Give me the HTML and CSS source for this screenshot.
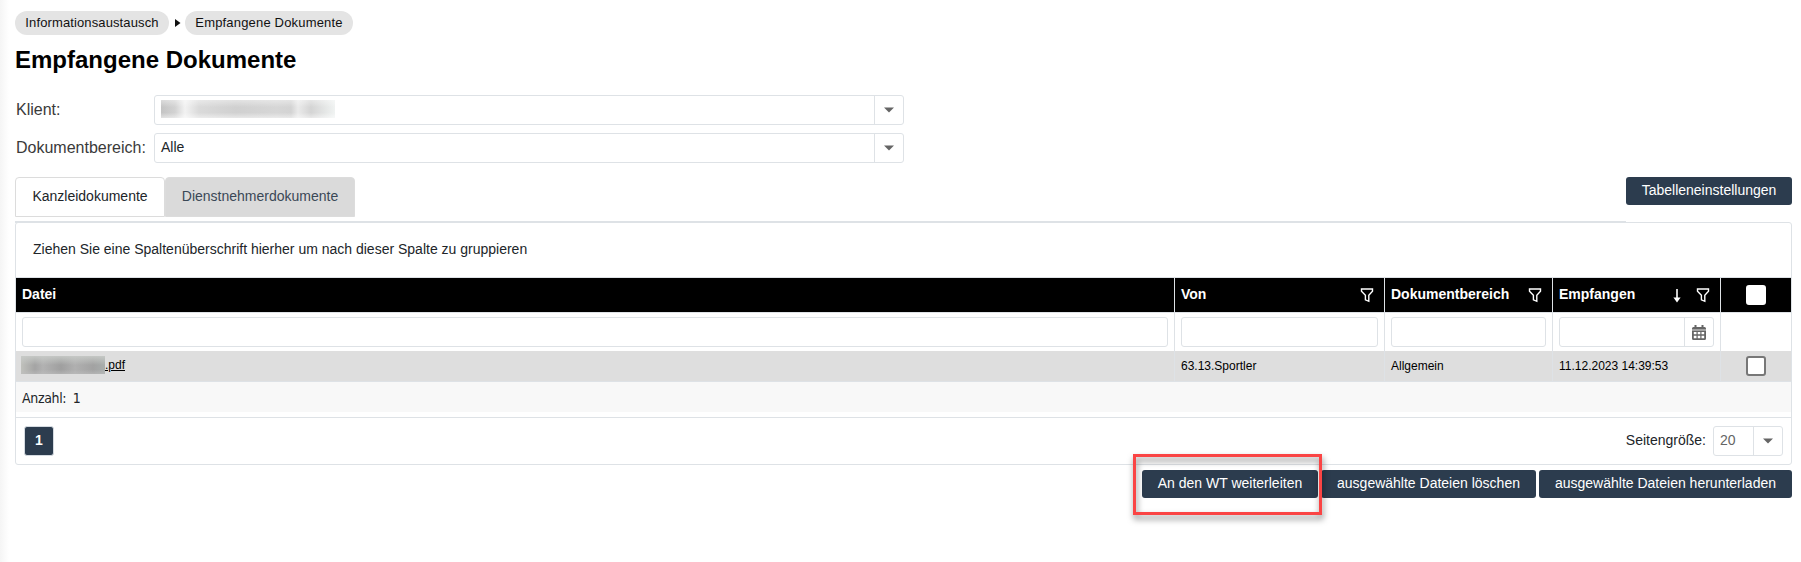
FILE: index.html
```html
<!DOCTYPE html>
<html lang="de">
<head>
<meta charset="utf-8">
<title>Empfangene Dokumente</title>
<link rel="stylesheet" href="styles.css">
</head>
<body>
<svg class="defs" width="0" height="0">
  <symbol id="funnel" viewBox="0 0 14 16"><path d="M1.5 2H12.5V4.2L8.8 8.2V14.3L5.4 12.8V8.2L1.5 4.2Z" fill="none" stroke="#fff" stroke-width="1.4"/></symbol>
  <symbol id="caret" viewBox="0 0 10 6"><path d="M0 .4H10L5 5.4Z" fill="#656565"/></symbol>
</svg>
<main class="page">
  <nav class="crumbs">
    <a class="crumb">Informationsaustausch</a>
    <svg class="crumb-arrow" width="6" height="8" viewBox="0 0 6 8"><path d="M0 0L5.5 4L0 8Z" fill="#111"/></svg>
    <a class="crumb crumb-current">Empfangene Dokumente</a>
  </nav>
  <h1 class="title">Empfangene Dokumente</h1>
  <div class="form">
    <label class="label">Klient:</label>
    <div class="combo"><span class="combo-text"><i class="redacted redacted-client"></i></span><span class="combo-btn"><svg width="10" height="6"><use href="#caret"/></svg></span></div>
    <label class="label">Dokumentbereich:</label>
    <div class="combo"><span class="combo-text">Alle</span><span class="combo-btn"><svg width="10" height="6"><use href="#caret"/></svg></span></div>
  </div>
  <div class="tabbar">
    <div class="tabs">
      <a class="tab tab-active">Kanzleidokumente</a>
      <a class="tab tab-inactive">Dienstnehmerdokumente</a>
    </div>
    <button class="btn btn-settings">Tabelleneinstellungen</button>
  </div>
  <section class="grid">
    <div class="group-hint">Ziehen Sie eine Spaltenüberschrift hierher um nach dieser Spalte zu gruppieren</div>
    <div class="row head">
      <div class="cell">Datei</div>
      <div class="cell">Von<svg class="funnel" width="14" height="16"><use href="#funnel"/></svg></div>
      <div class="cell">Dokumentbereich<svg class="funnel" width="14" height="16"><use href="#funnel"/></svg></div>
      <div class="cell">Empfangen<svg class="sort" width="8" height="14" viewBox="0 0 8 14"><path d="M4 0V9" stroke="#fff" stroke-width="1.6"/><path d="M.4 8.6H7.6L4 13.4Z" fill="#fff"/></svg><svg class="funnel funnel-sorted" width="14" height="16"><use href="#funnel"/></svg></div>
      <div class="cell cell-check"><span class="check check-all"></span></div>
    </div>
    <div class="row filter">
      <div class="cell"><span class="input"></span></div>
      <div class="cell"><span class="input"></span></div>
      <div class="cell"><span class="input"></span></div>
      <div class="cell"><span class="input input-date"><span class="date-btn"><svg width="14" height="15" viewBox="0 0 14 15"><path d="M2.5 0H4.5V2H9.5V0H11.5V2H12.5Q14 2 14 3.5V13.5Q14 15 12.5 15H1.5Q0 15 0 13.5V3.5Q0 2 1.5 2H2.5Z" fill="#656565"/><path d="M0 5H14" stroke="#fff" stroke-width=".8"/><path d="M1.8 7H4.5V9.3H1.8ZM5.7 7H8.3V9.3H5.7ZM9.5 7H12.2V9.3H9.5ZM1.8 10.8H4.5V13.2H1.8ZM5.7 10.8H8.3V13.2H5.7ZM9.5 10.8H12.2V13.2H9.5Z" fill="#fff"/></svg></span></span></div>
      <div class="cell"></div>
    </div>
    <div class="row data">
      <div class="cell cell-file"><i class="redacted redacted-file"></i><a class="file">.pdf</a></div>
      <div class="cell">63.13.Sportler</div>
      <div class="cell">Allgemein</div>
      <div class="cell">11.12.2023 14:39:53</div>
      <div class="cell cell-check"><span class="check"></span></div>
    </div>
    <div class="summary">Anzahl: 1</div>
    <div class="pager">
      <span class="page-no">1</span>
      <span class="size-label">Seitengröße:</span>
      <div class="combo combo-size"><span class="combo-text">20</span><span class="combo-btn"><svg width="10" height="6"><use href="#caret"/></svg></span></div>
    </div>
  </section>
  <div class="actions">
    <span class="marked"><button class="btn btn-forward">An den WT weiterleiten</button><span class="marker"></span></span>
    <button class="btn btn-delete">ausgewählte Dateien löschen</button>
    <button class="btn btn-download">ausgewählte Dateien herunterladen</button>
  </div>
</main>
</body>
</html>
```
FILE: styles.css
```css
* { box-sizing: border-box; }
body {
  margin: 0;
  height: 562px;
  overflow: hidden;
  background: linear-gradient(90deg, #f5f5f5 0, #fff 9px);
  font: 14px/16px "Liberation Sans", Arial, sans-serif;
  color: #212529;
}
.defs { position: absolute; }
.page { padding: 11px 9px 0 15px; }
.crumbs { display: flex; align-items: center; height: 24px; color: #111; font-size: 13px; }
.crumb { width: 154px; height: 24px; line-height: 23px; border-radius: 12px; background: #e4e4e4; text-align: center; letter-spacing: .12px; white-space: nowrap; }
.crumb-current { width: 168px; letter-spacing: .18px; }
.crumb-arrow { margin: 0 4px 0 6px; }
.title { margin: 11px 0 21px; font-size: 24px; line-height: 28px; color: #000; }
.form { display: grid; grid-template-columns: 139px 750px; row-gap: 8px; }
.label { padding-left: 1px; font-size: 16px; line-height: 29px; color: #3a3a3a; }
.combo { display: flex; height: 30px; border: 1px solid #dee2e6; border-radius: 3px; background: #fff; }
.combo-text { flex: 1; padding: 4px 0 0 6px; line-height: 19px; }
.combo-btn { display: flex; width: 29px; align-items: center; justify-content: center; border-left: 1px solid #dee2e6; }
.redacted { display: block; height: 18px; }
.redacted-client { width: 174px; background: linear-gradient(rgba(255, 255, 255, .4), transparent 40%, transparent 70%, rgba(255, 255, 255, .5)), linear-gradient(90deg, #c4c4c4 0, #d2d2d2 14px, #f2f2f2 24px, #dadada 38px, #d0d0d0 75px, #d6d6d6 115px, #d3d3d3 130px, #eaeaea 137px, #d4d4d4 150px, #f0f3f2 174px); }
.redacted-file { width: 85px; background: linear-gradient(rgba(200, 203, 200, .9), transparent 50%, transparent 75%, rgba(190, 190, 190, .6)), linear-gradient(90deg, #c0c1bc 0, #a4a4a4 14px, #b2b2b2 22px, #9f9f9f 40px, #b0b0b0 54px, #a2a2a2 72px, #a9aead 85px); }
.tabbar { display: flex; justify-content: space-between; align-items: flex-start; height: 45px; margin-top: 14px; }
.tabs { display: flex; }
.tab { height: 40px; border: 1px solid #dcdcdc; border-radius: 4px 4px 0 0; line-height: 37px; text-align: center; }
.tab-active { width: 150px; background: #fff; }
.tab-inactive { width: 190px; background: #dadada; color: #3a4856; }
.btn { height: 28px; padding: 0 0 2px; border: 0; border-radius: 3px; background: #2c3c4e; color: #fff; font: 14px/24px "Liberation Sans", Arial, sans-serif; white-space: nowrap; }
.btn-settings { width: 166px; }
.grid { height: 243px; border: 1px solid #dee2e6; border-radius: 3px; background: #fff; position: relative; }
.grid::before { content: ""; position: absolute; left: -1px; right: 165px; top: -2px; height: 2px; background: #dee2e6; }
.group-hint { height: 55px; padding-left: 17px; border-bottom: 1px solid #dee2e6; line-height: 53px; }
.row { display: grid; grid-template-columns: 1158px 210px 168px 168px 1fr; }
.cell { display: flex; padding: 0 6px; border-left: 1px solid #dee2e6; white-space: nowrap; }
.cell:first-child { border-left: 0; }
.head { height: 34px; background: #000; color: #fff; font-weight: bold; line-height: 32px; }
.funnel { margin: 9px 4px 0 auto; }
.sort { margin: 11px 0 0 auto; }
.funnel-sorted { margin-left: 15px; }
.filter { height: 39px; border-top: 1px solid #dee2e6; }
.input { flex: 1; height: 30px; margin-top: 4px; border: 1px solid #dee2e6; border-radius: 3px; }
.input-date { display: flex; justify-content: flex-end; }
.date-btn { display: flex; width: 29px; align-items: center; justify-content: center; border-left: 1px solid #dee2e6; }
.data { height: 31px; background: #dedede; color: #000; font-size: 12px; line-height: 30px; border-bottom: 1px solid #dee2e6; }
.cell-file { padding: 5px 0 0 5px; line-height: 18px; }
.file { text-decoration: underline; }
.cell-check { align-items: center; justify-content: center; padding: 0; }
.check { width: 20px; height: 20px; border: 2px solid #777; border-radius: 3px; background: #fff; }
.check-all { border-color: #fff; }
.redacted-file { width: 84px; }
.summary { height: 30px; padding-left: 6px; background: #f8f8f8; font: 14px/33px "DejaVu Sans Condensed", "DejaVu Sans", sans-serif; letter-spacing: -.35px; word-spacing: 3px; }
.pager { display: flex; height: 48px; margin-top: 5px; padding: 8px 8px 0; border-top: 1px solid #dee2e6; }
.page-no { width: 30px; height: 30px; border: 1px solid #d5dbe1; border-radius: 3px; background: #2c3c4e; color: #fff; font-weight: bold; line-height: 27px; text-align: center; }
.size-label { margin: 0 7px 0 auto; line-height: 29px; }
.combo-size { width: 70px; color: #656565; }
.actions { display: flex; justify-content: flex-end; margin-top: 5px; }
.marked { position: relative; }
.marker { position: absolute; z-index: 1; left: -9px; top: -16px; width: 189px; height: 61px; border: 3px solid #fa4444; filter: drop-shadow(1px 4px 3px rgba(0, 0, 0, .5)); }
.btn-forward { width: 176px; }
.btn-delete { width: 215px; margin: 0 3px 0 3px; }
.btn-download { width: 253px; }
```
